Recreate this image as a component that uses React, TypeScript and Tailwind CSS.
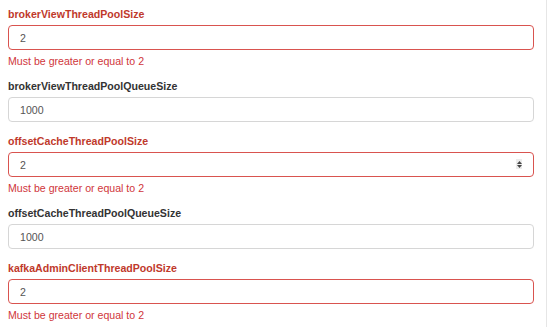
const fields = [
  { name: 'brokerViewThreadPoolSize', value: '2', error: 'Must be greater or equal to 2' },
  { name: 'brokerViewThreadPoolQueueSize', value: '1000' },
  { name: 'offsetCacheThreadPoolSize', value: '2', error: 'Must be greater or equal to 2', spinner: true },
  { name: 'offsetCacheThreadPoolQueueSize', value: '1000' },
  { name: 'kafkaAdminClientThreadPoolSize', value: '2', error: 'Must be greater or equal to 2' },
];

function Spinner() {
  return (
    <span className="absolute right-[12px] top-[7px] flex h-[10px] w-[6px] flex-col items-center justify-center gap-[1px] bg-[#ececec]">
      <svg width="5" height="3" viewBox="0 0 5 3">
        <path d="M2.5 0L5 3H0z" fill="#444" />
      </svg>
      <svg width="5" height="3" viewBox="0 0 5 3">
        <path d="M0 0h5L2.5 3z" fill="#444" />
      </svg>
    </span>
  );
}

export default function App() {
  return (
    <div className="h-[327px] w-[553px] overflow-hidden bg-white font-['Liberation_Sans',Arial,sans-serif] text-[10.6px]">
      <div className="h-full w-[547px] border-r border-[#e6e6e6] pl-2 pr-3 pt-[5px]">
        {fields.map((f) => (
          <div key={f.name} className={f.error ? 'mb-[7px]' : 'mb-[10px]'}>
            <label className={`block h-[18px] font-bold leading-[18px] ${f.error ? 'text-[#c0392b]' : 'text-[#333]'}`}>
              {f.name}
            </label>
            <div className="relative mt-[2px]">
              <input
                readOnly
                value={f.value}
                className={`block h-[25px] w-full rounded-[4px] border bg-white px-[11px] text-[10.6px] text-[#555] outline-none ${f.error ? 'border-[#d9534f]' : 'border-[#d6d6d6]'}`}
              />
              {f.spinner && <Spinner />}
            </div>
            {f.error && <div className="mt-[2px] h-[18px] leading-[18px] text-[#d0363b]">{f.error}</div>}
          </div>
        ))}
      </div>
    </div>
  );
}
